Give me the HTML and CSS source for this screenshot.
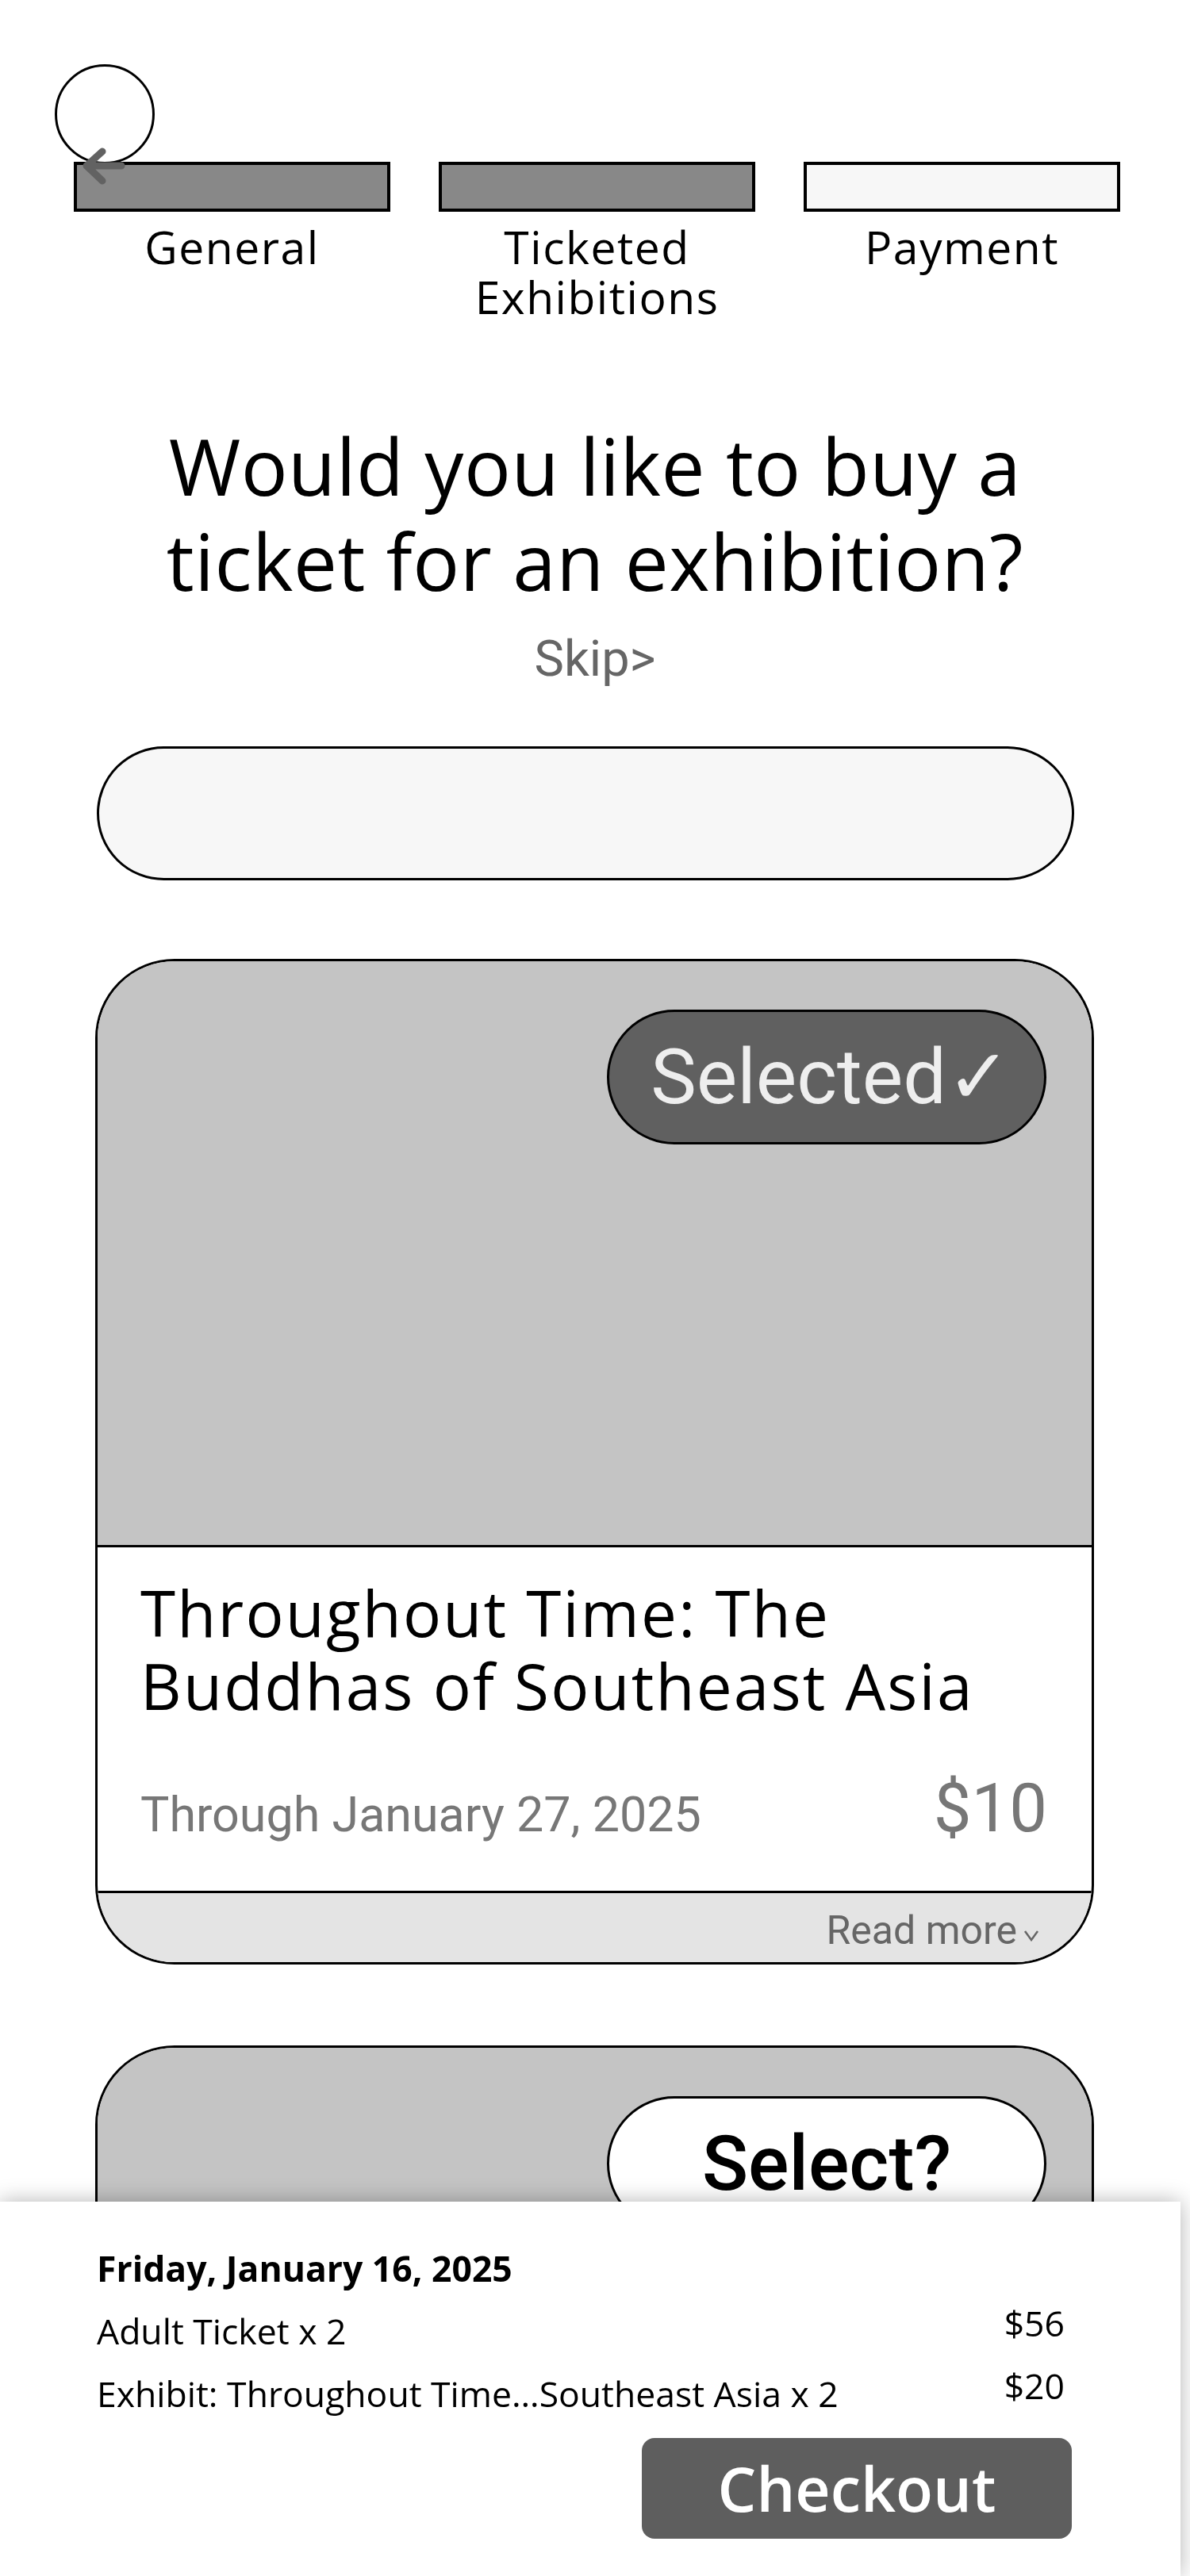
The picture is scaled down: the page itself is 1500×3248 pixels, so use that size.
FILE: index.html
```html
<!DOCTYPE html>
<html lang="en">
<head>
    <meta charset="UTF-8">
    <meta name="viewport" content="width=device-width, initial-scale=1.0">
    <title>Ticketed Exhibitions</title>

    <link rel="stylesheet" href="styles.css">
</head>

<body>
    <div class="screen">
        <a class="back" href="javascript:;" aria-label="Back"></a>
        <svg class="back-arrow" width="64" height="54" viewBox="0 0 64 54">
            <path d="M9 24 H53 M29 6 L9 24 L29 43" fill="none" stroke="#626262" stroke-width="9" stroke-linecap="round" stroke-linejoin="round"/>
        </svg>

        <ol class="steps">
            <li class="step done"><span class="bar"></span><span class="label">General</span></li>
            <li class="step done"><span class="bar"></span><span class="label">Ticketed<br>Exhibitions</span></li>
            <li class="step"><span class="bar"></span><span class="label">Payment</span></li>
        </ol>

        <h1 class="question">Would you like to buy a<br>ticket for an exhibition?</h1>
        <p class="skip"><a href="javascript:;">Skip&gt;</a></p>

        <div class="search"></div>

        <div class="exhibit">
            <div class="photo">
                <a class="pick active" href="javascript:;">Selected✓</a>
            </div>
            <div class="info">
                <h2>Throughout Time: The<br>Buddhas of Southeast Asia</h2>
                <div class="meta">
                    <span class="dates">Through January 27, 2025</span>
                    <span class="price">$10</span>
                </div>
            </div>
            <div class="more">
                Read more<svg width="20" height="15" viewBox="0 0 20 15"><path d="M2 2 L10 13 L18 2" fill="none" stroke="#666" stroke-width="2.5"/></svg>
            </div>
        </div>

        <div class="exhibit">
            <div class="photo">
                <a class="pick" href="javascript:;">Select?</a>
            </div>
            <div class="info">
                <h2>Throughout Time: The<br>Buddhas of Southeast Asia</h2>
                <div class="meta">
                    <span class="dates">Through January 27, 2025</span>
                    <span class="price">$10</span>
                </div>
            </div>
        </div>
    </div>

    <div class="summary">
        <p class="day">Friday, January 16, 2025</p>
        <div class="line"><span>Adult Ticket x 2</span><span>$56</span></div>
        <div class="line"><span>Exhibit: Throughout Time…Southeast Asia x 2</span><span>$20</span></div>
        <div class="actions">
            <a class="checkout" href="javascript:;">Checkout</a>
        </div>
    </div>
</body>
</html>
```

FILE: styles.css
```css
* {
  margin: 0;
  padding: 0;
  box-sizing: border-box;
}

body {
  background: #fff;
  color: #000;
  font-family: "Open Sans", "Noto Sans", sans-serif;
}

a {
  color: inherit;
  text-decoration: none;
}

.screen {
  position: relative;
  height: 100vh;
  overflow: hidden;
}

/* back button */
.back {
  position: absolute;
  left: 69px;
  top: 81px;
  width: 126px;
  height: 126px;
  border: 3px solid #000;
  border-radius: 50%;
  background: #fff;
}

.back-arrow {
  position: absolute;
  left: 100px;
  top: 185px;
  z-index: 2;
}

/* progress */
.steps {
  list-style: none;
  display: flex;
  gap: 61px;
  padding: 204px 0 0 93px;
}

.step {
  width: 399px;
  display: flex;
  flex-direction: column;
  align-items: center;
}

.step .bar {
  display: block;
  width: 100%;
  height: 63px;
  border: 4px solid #000;
  background: #f7f7f7;
}

.step.done .bar {
  background: #888;
}

.step .label {
  margin-top: 13px;
  font-size: 57px;
  line-height: 63px;
  letter-spacing: 1.5px;
  text-align: center;
}

.question {
  margin-top: 121px;
  font-size: 98px;
  font-weight: 400;
  line-height: 120px;
  letter-spacing: 0.5px;
  text-align: center;
}

.skip {
  margin-top: 29px;
  text-align: center;
  font-family: Roboto, sans-serif;
  font-size: 63px;
  line-height: 70px;
  color: #666;
}

.search {
  width: 1232px;
  height: 169px;
  margin: 75px 0 0 122px;
  border: 3px solid #000;
  border-radius: 85px;
  background: #f7f7f7;
}

/* exhibition cards */
.exhibit {
  width: 1259px;
  margin: 99px 0 0 120px;
  border: 3px solid #000;
  border-radius: 100px;
  overflow: hidden;
  background: #fff;
}

.exhibit + .exhibit {
  margin-top: 102px;
}

.photo {
  height: 739px;
  display: flex;
  justify-content: flex-end;
  align-items: flex-start;
  padding: 61px 57px 0 0;
  background: #c4c4c4;
  border-bottom: 3px solid #000;
}

.pick {
  width: 554px;
  height: 170px;
  display: flex;
  align-items: center;
  justify-content: center;
  border: 3px solid #000;
  border-radius: 85px;
  background: #fff;
  font-family: Roboto, sans-serif;
  font-size: 96px;
  font-weight: 500;
  color: #000;
}

.pick.active {
  padding-left: 10px;
  background: #606060;
  color: #eee;
  font-size: 97px;
  font-weight: 400;
}

.info {
  padding: 36px 56px 61px 54px;
}

.info h2 {
  font-size: 80px;
  font-weight: 400;
  line-height: 92px;
  letter-spacing: 2.2px;
}

.meta {
  margin-top: 67px;
  display: flex;
  justify-content: space-between;
  align-items: baseline;
  font-family: Roboto, sans-serif;
  color: #777;
  line-height: 1;
}

.meta .dates {
  font-size: 61px;
}

.meta .price {
  font-size: 85px;
}

.more {
  height: 90px;
  padding: 19px 66px 0 0;
  border-top: 3px solid #000;
  background: #e4e4e4;
  text-align: right;
  font-family: Roboto, sans-serif;
  font-size: 50px;
  line-height: 56px;
  color: #666;
}

.more svg {
  margin-left: 8px;
  vertical-align: 3px;
}

/* order summary sheet */
.summary {
  position: fixed;
  left: 0;
  bottom: 0;
  width: 1488px;
  height: 472px;
  padding: 58px 146px 0 122px;
  background: #fff;
  box-shadow: 0 0 26px rgba(0, 0, 0, 0.3);
  font-size: 44.5px;
  line-height: 52px;
}

.summary .day {
  font-weight: 700;
}

.line {
  margin-top: 17px;
  display: flex;
  justify-content: space-between;
  align-items: flex-start;
}

.line span:first-child {
  padding-top: 10px;
}

.actions {
  margin-top: 30px;
  display: flex;
  justify-content: flex-end;
  margin-right: -9px;
}

.checkout {
  width: 542px;
  height: 127px;
  display: flex;
  align-items: center;
  justify-content: center;
  border-radius: 16px;
  background: #5e5e5e;
  color: #fff;
  font-size: 77px;
  font-weight: 600;
}
```
